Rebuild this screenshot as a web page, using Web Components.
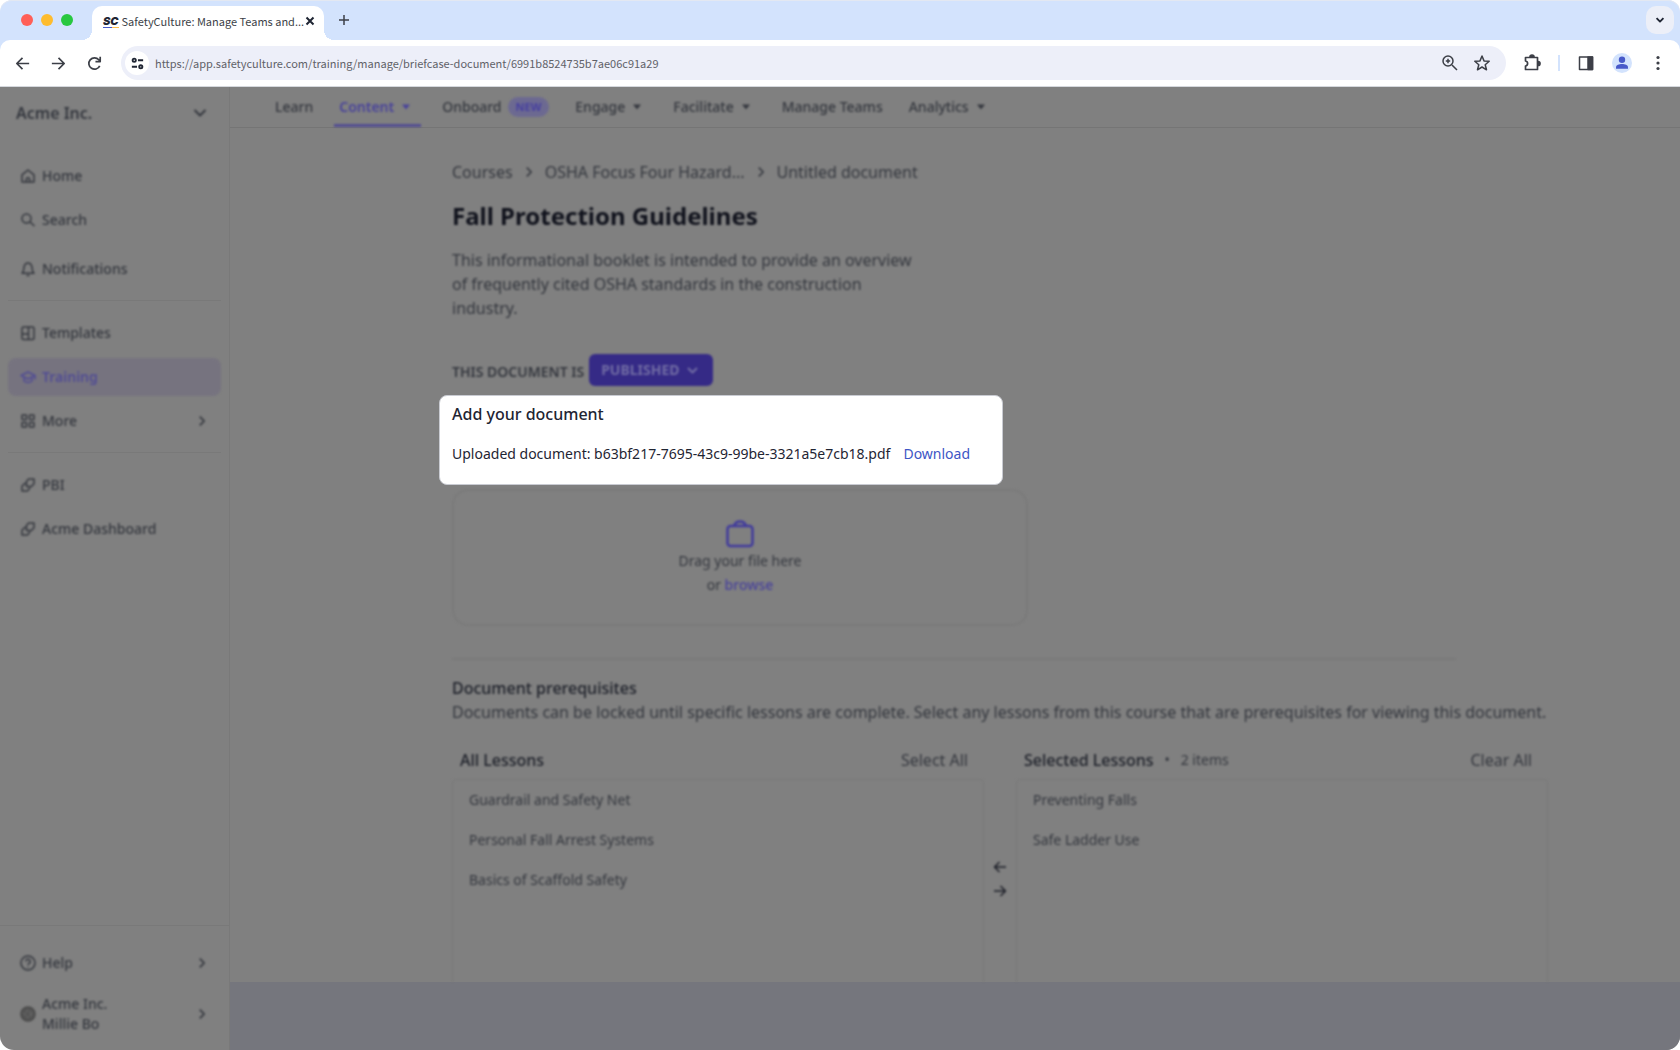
<!DOCTYPE html>
<html lang="en">
<head>
<meta charset="utf-8">
<title>SafetyCulture: Manage Teams and Training</title>
<style>
  :root {
    --chrome-blue: #d3e3fd;
    --surface: #808080;
    --line: #797979;
    --strong: #1c1f28;
    --text: #34373e;
    --muted: #34373e;
    --accent: #48429a;
    --accent-soft: #76737f;
    --band: #75767d;
  }
  html { background: #fff; }
  body {
    margin: 0;
    min-height: 100vh;
    display: flex;
    flex-direction: column;
    font: 14px/20px "Noto Sans", sans-serif;
    color: var(--text);
  }
</style>
</head>
<body>
<browser-chrome tab-title="SafetyCulture: Manage Teams and..." url="https://app.safetyculture.com/training/manage/briefcase-document/6991b8524735b7ae06c91a29"></browser-chrome>
<training-app>
  <side-bar slot="side" org="Acme Inc.">
    <side-group>
      <side-item icon="home">Home</side-item>
      <side-item icon="search">Search</side-item>
      <side-item icon="bell" apart>Notifications</side-item>
    </side-group>
    <side-group>
      <side-item icon="template">Templates</side-item>
      <side-item icon="cap" current>Training</side-item>
      <side-item icon="grid" more>More</side-item>
    </side-group>
    <side-group>
      <side-item icon="link">PBI</side-item>
      <side-item icon="link">Acme Dashboard</side-item>
    </side-group>
    <side-item slot="footer" icon="help" more>Help</side-item>
    <side-item slot="footer" icon="avatar" more>Acme Inc.<br>Millie Bo</side-item>
  </side-bar>
  <top-nav slot="nav">
    <nav-item>Learn</nav-item>
    <nav-item menu current>Content</nav-item>
    <nav-item badge="NEW">Onboard</nav-item>
    <nav-item menu>Engage</nav-item>
    <nav-item menu>Facilitate</nav-item>
    <nav-item>Manage Teams</nav-item>
    <nav-item menu>Analytics</nav-item>
  </top-nav>
  <document-editor></document-editor>
</training-app>

<script>
const define = (name, html, setup) => {
  const template = document.createElement('template');
  template.innerHTML = html;
  customElements.define(name, class extends HTMLElement {
    connectedCallback() {
      if (this.shadowRoot) return;
      const root = this.attachShadow({ mode: 'open' });
      root.append(template.content.cloneNode(true));
      if (setup) setup(this, root);
    }
  });
};

/* name: [viewBox size, markup] */
const ICONS = {
  back: [20, '<path d="M17 10H4M10 4l-6 6 6 6"/>'],
  forward: [20, '<path d="M3 10h13M10 4l6 6-6 6"/>'],
  reload: [20, '<path d="M15.500 12.500A6 6 0 1 1 14.500 6L16 7.500M16 3v5h-5"/>'],
  tune: [16, '<circle cx="4.500" cy="4.500" r="1.700"/><path d="M8.500 4.500H14M2 11.500h5.500"/><circle cx="11.500" cy="11.500" r="1.700"/>'],
  zoom: [20, '<circle cx="8" cy="8" r="5"/><path d="m12 12 5 5M8 5.800v4.400M5.800 8h4.400"/>'],
  star: [20, '<path d="m10 3 2 4.900 5.200.4-4 3.400 1.300 5.100-4.500-2.800-4.500 2.800 1.300-5.100-4-3.400 5.200-.4z"/>'],
  puzzle: [20, '<path d="M3.500 4.500h12v12h-12V13c2.800-.3 2.800-4.500 0-5z"/><path d="M8 4a2 2 0 0 1 4 0zM16 8.500a2 2 0 0 1 0 4z" fill="currentColor"/>'],
  panel: [20, '<path d="M3.500 4h13v12.500h-13z"/><path d="M12 4h4.500v12.500H12z" fill="currentColor"/>'],
  dots: [20, '<g fill="currentColor" stroke="none"><circle cx="10" cy="4.500" r="1.600"/><circle cx="10" cy="10" r="1.600"/><circle cx="10" cy="15.500" r="1.600"/></g>'],
  person: [20, '<circle cx="10" cy="10" r="10" fill="#d3e3fd" stroke="none"/><g fill="#4759c9" stroke="none"><circle cx="10" cy="6.800" r="3.200"/><path d="M4 15.800v-1.300c0-2.600 3-3.500 6-3.500s6 .9 6 3.500v1.300z"/></g>'],
  close: [12, '<path d="m2.500 2.500 7 7m0-7-7 7"/>'],
  plus: [12, '<path d="M6 1v10M1 6h10"/>'],
  down: [16, '<path d="m2.500 5 5.500 5.500L13.500 5"/>'],
  right: [16, '<path d="m5.500 3 5 5-5 5"/>'],
  caret: [12, '<path d="M2 3.500h8l-4 5z" fill="currentColor" stroke="none"/>'],
  home: [16, '<path d="M2 6.800 8 2l6 4.800V14H2zM6.300 14v-2.500a1.700 1.700 0 0 1 3.400 0V14"/>'],
  search: [16, '<circle cx="6.500" cy="6.500" r="4.500"/><path d="m10 10 4.500 4"/>'],
  bell: [16, '<path d="M2 12.200c2-1.700 1.700-3.700 2-6C4.500 3.500 6 2 8 2s3.500 1.500 4 4.200c.3 2.300 0 4.300 2 6zM6.500 14.500h3"/>'],
  template: [16, '<rect x="2" y="2" width="12" height="12.500" rx="1.500"/><path d="M8.500 2v12.500M2 9h6.500"/>'],
  cap: [16, '<path d="M1 6.500 8 3l7 3.500L8 10zM4 8.300V12c2.500 2 5.500 2 8 0V8.300M15 6.500v4"/>'],
  grid: [16, '<rect x="2" y="2" width="4.500" height="4.500" rx=".5"/><rect x="9.500" y="2" width="4.500" height="4.500" rx=".5"/><rect x="2" y="9.500" width="4.500" height="4.500" rx=".5"/><rect x="9.500" y="9.500" width="4.500" height="4.500" rx=".5"/>'],
  link: [16, '<path d="M9.500 10.500v1.300L7.300 14H2V9.200L4.500 6.500H6M6.500 9.500V4.200L8.700 2H14v4.800L11.500 9.500z"/>'],
  help: [16, '<circle cx="8" cy="8" r="7"/><path d="M5.800 6.500a2.200 2.200 0 1 1 3.300 1.900c-.8.500-1.100.8-1.100 1.500M8 11.500v1"/>'],
  avatar: [16, '<circle cx="8" cy="8" r="7" fill="#555" stroke="#484848"/><circle cx="8" cy="8" r="3" stroke="#6a6a6a" stroke-dasharray="2 2"/>'],
  case: [32, '<rect x="3.500" y="9" width="25" height="20" rx="3"/><path d="M10 9c1-3.300 3-4.500 6-4.500s5 1.200 6 4.500"/>'],
  left: [16, '<path d="M14 8H2.500M7.500 3l-5 5 5 5"/>'],
  toright: [16, '<path d="M2 8h11.500M8.500 3l5 5-5 5"/>']
};

define('ui-icon', `
<style>
  :host { display: inline-flex; flex: none; width: var(--size, 16px); height: var(--size, 16px); }
  svg { width: 100%; height: 100%; }
</style>
<svg aria-hidden="true" fill="none" stroke="currentColor" stroke-linejoin="round"></svg>`,
(host, root) => {
  const svg = root.querySelector('svg');
  const [box, markup] = ICONS[host.getAttribute('name')];
  svg.setAttribute('viewBox', `0 0 ${box} ${box}`);
  svg.setAttribute('stroke-width', host.getAttribute('weight') || '1.5');
  svg.innerHTML = markup;
});

define('browser-chrome', `
<style>
  :host { display: block; background: var(--chrome-blue); border-radius: 12px 12px 0 0; color: #3c3f47;
          font-family: "Noto Sans CJK SC", sans-serif; font-size: 11px; box-shadow: inset 0 1px #e3e8f2; }
  button { all: unset; display: inline-flex; }
  .tabs { height: 40px; display: flex; align-items: center; padding: 0 6px 0 21px; }
  .lights { display: flex; gap: 8px; width: 71px; }
  .lights i { width: 12px; height: 12px; border-radius: 50%; }
  .tab { box-sizing: border-box; width: 232px; height: 34px; margin-top: 6px; padding: 0 10px 4px 11px; background: #fff; border-radius: 10px 10px 0 0;
         display: flex; align-items: center; position: relative; }
  .tab::before, .tab::after { content: ""; position: absolute; bottom: 0; width: 10px; height: 10px; }
  .tab::before { right: 100%; background: radial-gradient(circle at 0 0, transparent 10px, #fff 10px); }
  .tab::after { left: 100%; background: radial-gradient(circle at 100% 0, transparent 10px, #fff 10px); }
  .logo { font: italic 900 11px/12px Inter, sans-serif; color: #1f2533; width: 16px; margin-right: 3px; height: 12px;
          border-bottom: 1px solid; border-image: linear-gradient(90deg, #4759c9 55%, #ffc04d 55%) 1; }
  .title { flex: 1; white-space: nowrap; }
  .tab ui-icon { --size: 12px; color: #1f2533; }
  .add { margin-left: 14px; }
  .add ui-icon { --size: 12px; }
  .list { margin-left: auto; width: 28px; height: 28px; border-radius: 10px; background: #eceff8; align-items: center; justify-content: center; }
  .list ui-icon { --size: 10px; color: #1f2533; }
  .bar { height: 46px; background: #fff; border-bottom: 1px solid #d5d8dd; border-radius: 10px 10px 0 0; display: flex; align-items: center; padding: 0 12px 0 13px; }
  .bar ui-icon { --size: 20px; }
  .moves { display: flex; gap: 16px; margin-right: 16px; }
  .moves ui-icon { --size: 19px; }
  .moves button { width: 20px; }
  .address { flex: 1; height: 34px; border-radius: 17px; background: #edeff9; display: flex; align-items: center; gap: 6px; padding: 0 14px 0 4px; }
  .tune { width: 24px; height: 24px; border-radius: 50%; background: #fff; align-items: center; justify-content: center; }
  .tune ui-icon { --size: 15px; color: #1f2533; }
  input { all: unset; flex: 1; color: #5f6168; }
  .address .marks, .tools { display: flex; align-items: center; gap: 12px; }
  .tools { gap: 16px; margin-left: 16px; }
  .tools hr { width: 2px; height: 16px; border: 0; margin: 0; background: var(--chrome-blue); }
</style>
<div class="tabs">
  <div class="lights"><i style="background:#ff5f57"></i><i style="background:#febc2e"></i><i style="background:#28c840"></i></div>
  <div class="tab"><span class="logo">SC</span><span class="title"></span><button aria-label="Close tab"><ui-icon name="close" weight="2"></ui-icon></button></div>
  <button class="add" aria-label="New tab"><ui-icon name="plus"></ui-icon></button>
  <button class="list" aria-label="Search tabs"><ui-icon name="down" weight="3"></ui-icon></button>
</div>
<div class="bar">
  <div class="moves">
    <button aria-label="Back"><ui-icon name="back" weight="1.800"></ui-icon></button>
    <button aria-label="Forward"><ui-icon name="forward" weight="1.800"></ui-icon></button>
    <button aria-label="Reload"><ui-icon name="reload" weight="1.800"></ui-icon></button>
  </div>
  <div class="address">
    <button class="tune" aria-label="Site settings"><ui-icon name="tune" weight="2"></ui-icon></button>
    <input type="text" aria-label="Address">
    <div class="marks">
      <button aria-label="Zoom"><ui-icon name="zoom"></ui-icon></button>
      <button aria-label="Bookmark"><ui-icon name="star"></ui-icon></button>
    </div>
  </div>
  <div class="tools">
    <button aria-label="Extensions"><ui-icon name="puzzle" weight="1.700"></ui-icon></button><hr>
    <button aria-label="Side panel"><ui-icon name="panel"></ui-icon></button>
    <button aria-label="Profile"><ui-icon name="person"></ui-icon></button>
    <button aria-label="Menu"><ui-icon name="dots"></ui-icon></button>
  </div>
</div>`,
(host, root) => {
  root.querySelector('.title').textContent = host.getAttribute('tab-title');
  root.querySelector('input').setAttribute('value', host.getAttribute('url'));
});

define('training-app', `
<style>
  :host { flex: 1; display: flex; background: var(--surface); border-radius: 0 0 14px 14px; overflow: hidden; }
  .main { flex: 1; min-width: 0; display: flex; flex-direction: column; }
  .rest { flex: 1; background: var(--band); }
</style>
<slot name="side"></slot>
<div class="main"><slot name="nav"></slot><slot></slot><div class="rest"></div></div>`);

define('side-bar', `
<style>
  :host { box-sizing: border-box; width: 230px; flex: none; display: flex; flex-direction: column; border-right: 1px solid var(--line); }
  .org { all: unset; box-sizing: border-box; display: flex; justify-content: space-between; align-items: center; height: 52px; margin-bottom: 18px; padding: 0 21px 0 16px;
         font-weight: 600; font-size: 16px; color: var(--muted); filter: blur(1px); }
  .foot { margin-top: auto; border-top: 1px solid var(--line); padding: 18px 8px 16px; display: flex; flex-direction: column; gap: 12px; }
</style>
<button class="org"><span></span><ui-icon name="down" weight="2"></ui-icon></button>
<slot></slot>
<div class="foot"><slot name="footer"></slot></div>`,
(host, root) => { root.querySelector('span').textContent = host.getAttribute('org'); });

define('side-group', `
<style>
  :host { display: flex; flex-direction: column; gap: 6px; margin: 0 8px; padding-bottom: 12px; }
  :host(:not(:last-of-type)) { border-bottom: 1px solid var(--line); margin-bottom: 13px; }
</style><slot></slot>`);

define('side-item', `
<style>
  :host { display: block; }
  :host([apart]) { margin-top: 5px; }
  a { box-sizing: border-box; min-height: 38px; padding: 0 12px; display: flex; align-items: center; gap: 6px; border-radius: 8px;
      color: var(--muted); font-weight: 500; font-size: 14px; line-height: 20px; text-decoration: none; filter: blur(1px); }
  :host([current]) a { background: var(--accent-soft); color: #514c94; font-weight: 600; }
  span { flex: 1; }
  .more { display: none; --size: 14px; }
  :host([more]) .more { display: inline-flex; }
</style>
<a href="#"><span><slot></slot></span><ui-icon class="more" name="right" weight="2"></ui-icon></a>`,
(host, root) => {
  const link = root.querySelector('a');
  const icon = document.createElement('ui-icon');
  icon.setAttribute('name', host.getAttribute('icon'));
  link.prepend(icon);
  if (host.hasAttribute('current')) link.setAttribute('aria-current', 'page');
});

define('top-nav', `
<style>
  :host { box-sizing: border-box; height: 41px; flex: none; display: flex; gap: 16px; padding-left: 40px; border-bottom: 1px solid #757575; }
</style><slot></slot>`);

define('nav-item', `
<style>
  :host { display: flex; }
  a { display: flex; align-items: center; gap: 6px; padding: 3px 5px 0; color: var(--text); font-weight: 500; text-decoration: none; filter: blur(1px); white-space: nowrap; border-bottom: 3px solid transparent; }
  :host([menu]) a { padding-right: 9px; }
  :host([current]) a { color: var(--accent); font-weight: 600; border-color: #524d90; border-radius: 3px 3px 0 0; }
  ui-icon, .badge { display: none; }
  ui-icon { --size: 12px; }
  :host([menu]) ui-icon { display: inline-flex; }
  :host([badge]) .badge { display: block; padding: 0 8px; border-radius: 10px; background: #6c6991; color: #463fa0; font-size: 11px; font-weight: 700; line-height: 20px; }
</style>
<a href="#"><slot></slot><ui-icon name="caret"></ui-icon><span class="badge"></span></a>`,
(host, root) => {
  const badge = root.querySelector('.badge');
  if (host.hasAttribute('badge')) badge.textContent = host.getAttribute('badge');
  else badge.remove();
});

define('status-picker', `
<style>
  :host { display: flex; align-items: center; gap: 5px; font-weight: 600; color: var(--text); }
  button { all: unset; box-sizing: border-box; height: 32px; padding: 0 14px 0 12px; margin-bottom: 3px; border-radius: 6px; background: #352a86; color: #716ca4; font-weight: 700;
           display: flex; align-items: center; gap: 6px; }
  ui-icon { --size: 13px; }
</style>
<span id="label">THIS DOCUMENT IS</span>
<button aria-describedby="label"><slot></slot><ui-icon name="down" weight="2.500"></ui-icon></button>`);

define('spotlight-card', `
<style>
  :host { box-sizing: border-box; display: flex; flex-direction: column; gap: 16px; width: fit-content; padding: 6px 32px 18px 12px; margin-left: -13px;
          background: #fff; border: 1px solid #c9cbd2; border-radius: 8px; color: #1f2533; }
</style><slot></slot>`);

define('drop-zone', `
<style>
  :host { box-sizing: border-box; display: flex; flex-direction: column; align-items: center; max-width: 576px; height: 137px; padding-top: 26px;
          border: 2px solid #7a7a7a; border-radius: 16px; line-height: 24px; color: var(--text); filter: blur(1px); }
  ui-icon { --size: 32px; color: #403a9c; }
  button { all: unset; color: var(--accent); font-weight: 500; }
</style>
<ui-icon name="case" weight="2.500"></ui-icon>
<span>Drag your file here</span>
<span>or <button>browse</button></span>`);

define('lesson-list', `
<style>
  :host { flex: 1; filter: blur(1px); }
  header { display: flex; align-items: center; height: 24px; padding: 0 16px 0 8px; margin-bottom: 7px; font-size: 16px; color: var(--text); }
  h3 { margin: 0; font-size: 16px; font-weight: 500; color: var(--strong); }
  small { font-size: 14px; white-space: pre; }
  button { all: unset; margin-left: auto; }
  ul { box-sizing: border-box; list-style: none; margin: 0; padding: 0 16px; height: 203px; border: 1px solid var(--line); border-bottom: 0; border-radius: 4px 4px 0 0; }
  li { height: 40px; line-height: 40px; }
</style>
<header><h3></h3><small></small><button></button></header><ul></ul>`,
(host, root) => {
  root.querySelector('h3').textContent = host.getAttribute('heading');
  root.querySelector('button').textContent = host.getAttribute('action');
  const note = host.getAttribute('note');
  if (note) root.querySelector('small').textContent = '   •   ' + note;
  root.querySelector('ul').innerHTML = host.getAttribute('items').split('|').map(t => `<li>${t}</li>`).join('');
});

define('document-editor', `
<style>
  :host { display: block; padding: 32px 24px 0 222px; font-size: 16px; line-height: 24px; color: var(--text); }
  .soft { filter: blur(1px); }
  nav { display: flex; align-items: center; gap: 9px; }
  nav ui-icon { --size: 14px; }
  a { color: inherit; text-decoration: none; }
  h1 { margin: 16px 0; font-size: 24px; line-height: 32px; font-weight: 700; color: #10121c; }
  p { margin: 0; }
  .intro { max-width: 464px; margin-bottom: 34px; }
  h2 { margin: 0; font-size: 16px; line-height: 24px; font-weight: 500; }
  section h2 { color: var(--strong); }
  status-picker { font-size: 14px; margin-bottom: 6px; }
  .file { font-size: 14px; display: flex; gap: 13px; }
  .file a { color: #3d56c5; }
  drop-zone { font-size: 14px; margin: 4px 0 32px; }
  hr { border: 0; border-top: 2px solid #797979; margin: 0 92px 16px 0; max-width: 1004px; }
  .lists { display: flex; max-width: 1096px; gap: 8px; margin-top: 24px; font-size: 14px; }
  .swap { display: flex; flex-direction: column; justify-content: center; gap: 8px; padding-top: 28px; }
  .swap button { all: unset; display: flex; color: var(--strong); }
</style>
<div class="soft">
  <nav aria-label="Breadcrumb"><a href="#">Courses</a><ui-icon name="right" weight="1.800"></ui-icon><a href="#">OSHA Focus Four Hazard...</a><ui-icon name="right" weight="1.800"></ui-icon><a href="#">Untitled document</a></nav>
  <h1>Fall Protection Guidelines</h1>
  <p class="intro">This informational booklet is intended to provide an overview of frequently cited OSHA standards in the construction industry.</p>
  <status-picker>PUBLISHED</status-picker>
</div>
<spotlight-card>
  <h2>Add your document</h2>
  <div class="file"><span>Uploaded document: b63bf217-7695-43c9-99be-3321a5e7cb18.pdf</span><a href="#">Download</a></div>
</spotlight-card>
<drop-zone></drop-zone>
<section>
  <div class="soft">
    <hr>
    <h2>Document prerequisites</h2>
    <p>Documents can be locked until specific lessons are complete. Select any lessons from this course that are prerequisites for viewing this document.</p>
  </div>
  <div class="lists">
    <lesson-list heading="All Lessons" action="Select All" items="Guardrail and Safety Net|Personal Fall Arrest Systems|Basics of Scaffold Safety"></lesson-list>
    <div class="swap soft">
      <button aria-label="Move left"><ui-icon name="left"></ui-icon></button>
      <button aria-label="Move right"><ui-icon name="toright"></ui-icon></button>
    </div>
    <lesson-list heading="Selected Lessons" note="2 items" action="Clear All" items="Preventing Falls|Safe Ladder Use"></lesson-list>
  </div>
</section>`);
</script>
</body>
</html>
